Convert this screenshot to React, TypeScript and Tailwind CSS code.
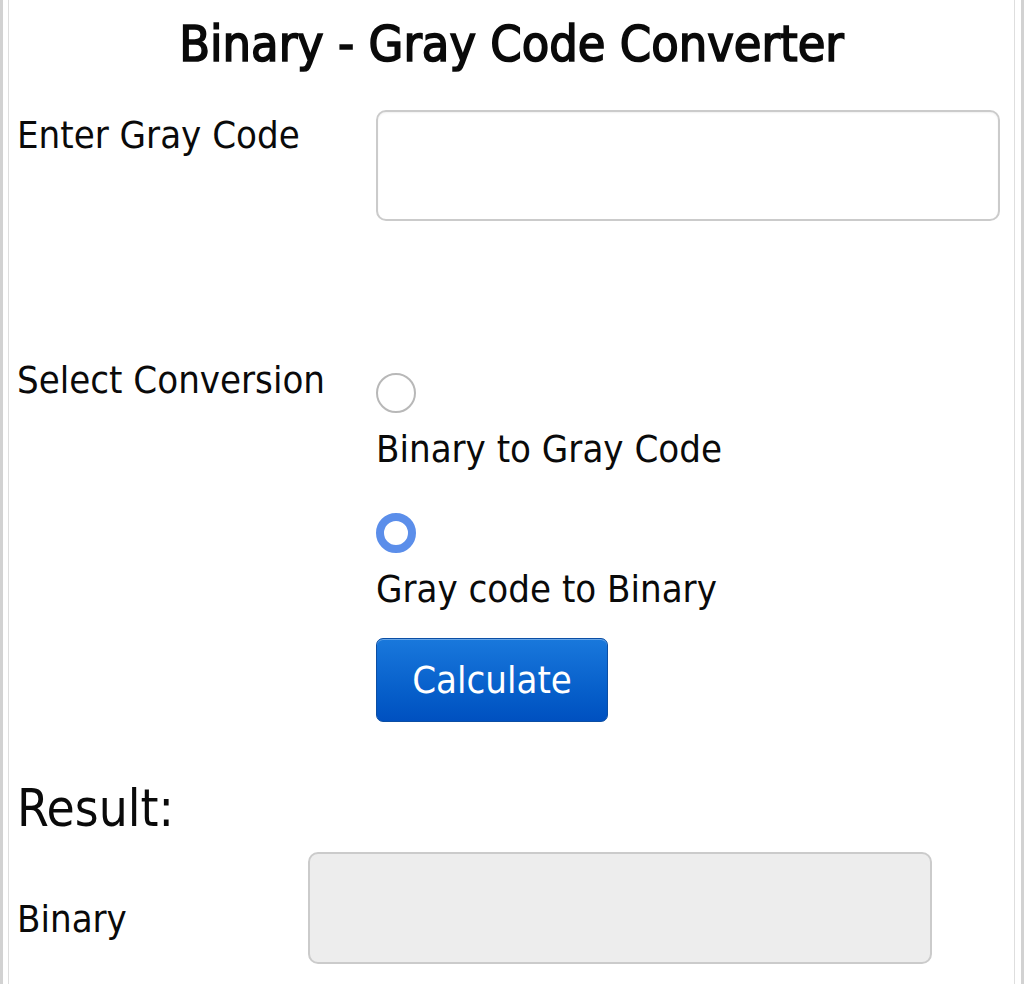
import { useState } from 'react';

const App = () => {
  const [mode, setMode] = useState<'b2g' | 'g2b'>('g2b');

  return (
    <div className="min-h-screen bg-white border-x-[3px] border-[#d2d2d2] pl-[5px] pr-[6px] font-['DejaVu_Sans_Condensed','DejaVu_Sans',sans-serif] text-[#0a0a0a]">
      <div className="min-h-[984px] border-x border-[#dedede] pl-[8px]">
        {/* Title */}
        <h1 className="pt-[19px] pr-[8px] text-center text-[50px] leading-none [-webkit-text-stroke:1.6px_#0a0a0a]">
          Binary - Gray Code Converter
        </h1>

        {/* Input row */}
        <div className="mt-[41px] flex items-start">
          <label className="w-[359px] shrink-0 mt-[6px] text-[38px] leading-none">Enter Gray Code</label>
          <input
            type="text"
            className="w-[624px] h-[111px] rounded-[10px] border-2 border-[#cbcbcb] bg-white px-4 text-[38px] outline-none shadow-[inset_0_1px_2px_rgba(0,0,0,0.06)]"
          />
        </div>

        {/* Conversion selection */}
        <div className="mt-[140px] flex items-start">
          <div className="w-[359px] shrink-0 text-[38px] leading-none">Select Conversion</div>
          <div className="flex flex-col items-start">
            <input
              type="radio"
              name="conv"
              checked={mode === 'b2g'}
              onChange={() => setMode('b2g')}
              className="mt-[12px] w-10 h-10 appearance-none rounded-full border-2 border-[#b8b8b8] bg-white checked:border-[8px] checked:border-[#5b8eea]"
            />
            <span className="mt-[17px] text-[38px] leading-none">Binary to Gray Code</span>
            <input
              type="radio"
              name="conv"
              checked={mode === 'g2b'}
              onChange={() => setMode('g2b')}
              className="mt-[45px] w-10 h-10 appearance-none rounded-full border-2 border-[#b8b8b8] bg-white checked:border-[8px] checked:border-[#5b8eea]"
            />
            <span className="mt-[17px] text-[38px] leading-none">Gray code to Binary</span>
            <button className="mt-[30px] w-[232px] h-[84px] flex items-center justify-center rounded-[7px] border border-[#0b4ea4] bg-gradient-to-b from-[#1978dc] to-[#0050c0] text-white text-[38px] leading-none shadow-[inset_0_1px_0_rgba(255,255,255,0.35)]">
              Calculate
            </button>
          </div>
        </div>

        {/* Result */}
        <div className="mt-[61px] text-[51px] leading-none">Result:</div>

        <div className="mt-[18px] flex items-start">
          <label className="w-[291px] shrink-0 mt-[48px] text-[38px] leading-none">Binary</label>
          <div className="w-[624px] h-[112px] rounded-[10px] border-2 border-[#cbcbcb] bg-[#ededed]" />
        </div>
      </div>
    </div>
  );
};

export default App;
